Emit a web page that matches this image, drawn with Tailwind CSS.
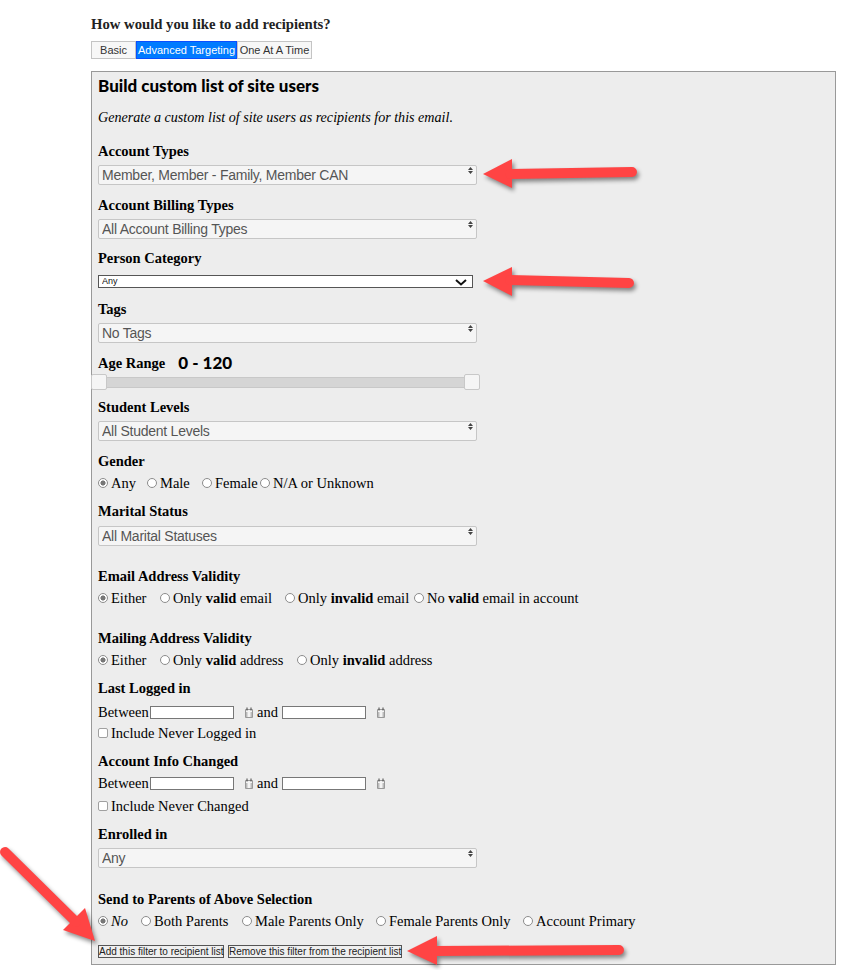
<!DOCTYPE html>
<html><head><meta charset="utf-8"><title>Recipients</title>
<script src="https://cdn.jsdelivr.net/npm/@tailwindcss/browser@4"></script></head>
<body class="bg-white font-['Liberation_Serif',serif] text-[14.5px] text-black">
<div class="relative h-[970px] w-[842px] overflow-hidden">
<div class="pl-[91px] pt-[14px]">
 <h2 class="h-5 text-[14.7px] font-bold leading-5 text-[#222]">How would you like to add recipients?</h2>
 <div class="mt-[7px] flex h-[18px] font-['Liberation_Sans',sans-serif] text-[11px] leading-4 whitespace-nowrap">
  <button class="w-[45px] border border-[#c4c4c4] bg-[#f7f7f7] text-[#333]">Basic</button>
  <button class="w-[101px] border border-[#0a4fff] bg-[#007bff] text-white">Advanced Targeting</button>
  <button class="w-[75px] border border-[#c4c4c4] bg-[#f7f7f7] text-[#333]">One At A Time</button>
 </div>
 <section class="mt-3 h-[894px] w-[745px] border border-[#999] bg-[#ededed] pl-[6px] pt-1 [&_h4]:h-5 [&_h4]:font-bold [&_h4]:leading-5">
  <h3 class="h-5 font-['Lato',sans-serif] text-[17px] font-black leading-5">Build custom list of site users</h3>
  <p class="mt-[11px] h-5 text-[14.1px] italic leading-5">Generate a custom list of site users as recipients for this email.</p>

  <h4 class="mt-[14px]">Account Types</h4>
  <div class="relative mt-1 h-5 w-[379px]"><select class="block h-5 w-full appearance-none rounded-[2px] border border-[#c6c6c6] bg-[#f5f5f5] pl-[3px] font-['Liberation_Sans',sans-serif] text-[14px] leading-4 tracking-[-0.25px] text-[#555]"><option>Member, Member - Family, Member CAN</option></select><svg class="absolute right-[4px] top-[2px] h-[7px] w-[5px]" viewBox="0 0 5 7"><path d="M2.500 0 5 3H0ZM0 4h5L2.500 7Z" fill="#444"/></svg></div>

  <h4 class="mt-[10px]">Account Billing Types</h4>
  <div class="relative mt-1 h-5 w-[379px]"><select class="block h-5 w-full appearance-none rounded-[2px] border border-[#c6c6c6] bg-[#f5f5f5] pl-[3px] font-['Liberation_Sans',sans-serif] text-[14px] leading-4 tracking-[-0.25px] text-[#555]"><option>All Account Billing Types</option></select><svg class="absolute right-[4px] top-[2px] h-[7px] w-[5px]" viewBox="0 0 5 7"><path d="M2.500 0 5 3H0ZM0 4h5L2.500 7Z" fill="#444"/></svg></div>

  <h4 class="mt-[9px]">Person Category</h4>
  <div class="relative mt-[7px] h-[13px] w-[375px]"><select class="block h-[13px] w-full appearance-none border border-[#555] bg-white pl-[3px] font-['Liberation_Sans',sans-serif] text-[9px] leading-[11px] text-[#111]"><option>Any</option></select><svg class="absolute right-[6px] top-[4px] h-[7px] w-[12px]" viewBox="0 0 12 7"><path d="M1 1 6 5.500 11 1" fill="none" stroke="#111" stroke-width="2"/></svg></div>

  <h4 class="mt-[11px]">Tags</h4>
  <div class="relative mt-1 h-5 w-[379px]"><select class="block h-5 w-full appearance-none rounded-[2px] border border-[#c6c6c6] bg-[#f5f5f5] pl-[3px] font-['Liberation_Sans',sans-serif] text-[14px] leading-4 tracking-[-0.25px] text-[#555]"><option>No Tags</option></select><svg class="absolute right-[4px] top-[2px] h-[7px] w-[5px]" viewBox="0 0 5 7"><path d="M2.500 0 5 3H0ZM0 4h5L2.500 7Z" fill="#444"/></svg></div>

  <h4 class="mt-[10px] flex items-center gap-[13px]">Age Range <span class="font-['Lato',sans-serif] text-[17px] font-black">0 - 120</span></h4>
  <div class="relative -ml-[6px] mt-1 h-[11px] w-[388px] rounded-r-[2px] border border-[#c8c8c8] bg-[#d5d5d5]">
   <span class="absolute -left-[2px] -top-[4px] h-4 w-4 rounded-[2px] border border-[#c8c8c8] bg-[#f5f5f5]"></span>
   <span class="absolute -top-[4px] left-[371px] h-4 w-4 rounded-[2px] border border-[#c8c8c8] bg-[#f5f5f5]"></span>
  </div>

  <h4 class="mt-[9px]">Student Levels</h4>
  <div class="relative mt-1 h-5 w-[379px]"><select class="block h-5 w-full appearance-none rounded-[2px] border border-[#c6c6c6] bg-[#f5f5f5] pl-[3px] font-['Liberation_Sans',sans-serif] text-[14px] leading-4 tracking-[-0.25px] text-[#555]"><option>All Student Levels</option></select><svg class="absolute right-[4px] top-[2px] h-[7px] w-[5px]" viewBox="0 0 5 7"><path d="M2.500 0 5 3H0ZM0 4h5L2.500 7Z" fill="#444"/></svg></div>

  <h4 class="mt-[10px]">Gender</h4>
  <div class="mt-[2px] flex h-5 items-center whitespace-nowrap pt-[2px] [&_input]:mr-[3px] [&_input]:-mt-[2px] [&_input]:size-[10px] [&_input]:appearance-none [&_input]:rounded-full [&_input]:border [&_input]:border-[#8c8c8c] [&_input]:bg-white [&_input]:checked:bg-[radial-gradient(circle,#777_40%,#fff_50%)]">
   <label class="flex w-[49px] items-center"><input type="radio" name="g" checked>Any</label>
   <label class="flex w-[55px] items-center"><input type="radio" name="g">Male</label>
   <label class="flex w-[58px] items-center"><input type="radio" name="g">Female</label>
   <label class="flex items-center"><input type="radio" name="g">N/A or Unknown</label>
  </div>

  <h4 class="mt-[8px]">Marital Status</h4>
  <div class="relative mt-[5px] h-5 w-[379px]"><select class="block h-5 w-full appearance-none rounded-[2px] border border-[#c6c6c6] bg-[#f5f5f5] pl-[3px] font-['Liberation_Sans',sans-serif] text-[14px] leading-4 tracking-[-0.25px] text-[#555]"><option>All Marital Statuses</option></select><svg class="absolute right-[4px] top-[2px] h-[7px] w-[5px]" viewBox="0 0 5 7"><path d="M2.500 0 5 3H0ZM0 4h5L2.500 7Z" fill="#444"/></svg></div>

  <h4 class="mt-5">Email Address Validity</h4>
  <div class="mt-[2px] flex h-5 items-center whitespace-nowrap pt-[2px] [&_input]:mr-[3px] [&_input]:-mt-[2px] [&_input]:size-[10px] [&_input]:appearance-none [&_input]:rounded-full [&_input]:border [&_input]:border-[#8c8c8c] [&_input]:bg-white [&_input]:checked:bg-[radial-gradient(circle,#777_40%,#fff_50%)]">
   <label class="flex w-[62px] items-center"><input type="radio" name="e" checked>Either</label>
   <label class="flex w-[125px] items-center"><input type="radio" name="e"><span>Only <b>valid</b> email</span></label>
   <label class="flex w-[129px] items-center"><input type="radio" name="e"><span>Only <b>invalid</b> email</span></label>
   <label class="flex items-center"><input type="radio" name="e"><span>No <b>valid</b> email in account</span></label>
  </div>

  <h4 class="mt-5">Mailing Address Validity</h4>
  <div class="mt-[2px] flex h-5 items-center whitespace-nowrap pt-[2px] [&_input]:mr-[3px] [&_input]:-mt-[2px] [&_input]:size-[10px] [&_input]:appearance-none [&_input]:rounded-full [&_input]:border [&_input]:border-[#8c8c8c] [&_input]:bg-white [&_input]:checked:bg-[radial-gradient(circle,#777_40%,#fff_50%)]">
   <label class="flex w-[62px] items-center"><input type="radio" name="m" checked>Either</label>
   <label class="flex w-[137px] items-center"><input type="radio" name="m"><span>Only <b>valid</b> address</span></label>
   <label class="flex items-center"><input type="radio" name="m"><span>Only <b>invalid</b> address</span></label>
  </div>

  <h4 class="mt-[8px]">Last Logged in</h4>
  <div class="mt-1 flex h-5 items-center pt-[2px] [&_input]:-mt-[2px] [&_svg]:-mt-[2px]">
   <span class="w-[52px]">Between</span><input class="h-[13px] w-[84px] border border-[#777] bg-white">
   <svg class="ml-[11px] h-[11px] w-[8px]" viewBox="0 0 8 11"><path d="M.5 2.500h7v8h-7z" fill="#f4f4f4" stroke="#999"/><path d="M2 .5v3M6 .5v3" stroke="#444"/><path d="M1 5h1.500v5H1zM5.500 5H7v5H5.500z" fill="#bbb"/></svg>
   <span class="ml-[4px] w-[25px]">and</span><input class="h-[13px] w-[84px] border border-[#777] bg-white">
   <svg class="ml-[11px] h-[11px] w-[8px]" viewBox="0 0 8 11"><path d="M.5 2.500h7v8h-7z" fill="#f4f4f4" stroke="#999"/><path d="M2 .5v3M6 .5v3" stroke="#444"/><path d="M1 5h1.500v5H1zM5.500 5H7v5H5.500z" fill="#bbb"/></svg>
  </div>
  <label class="mt-px flex h-5 items-center pt-[2px]"><input type="checkbox" class="-mt-[2px] mr-[3px] size-[10px] appearance-none rounded-[2px] border border-[#a0a0a0] bg-white">Include Never Logged in</label>

  <h4 class="mt-[8px]">Account Info Changed</h4>
  <div class="mt-[2px] flex h-5 items-center pt-[2px] [&_input]:-mt-[2px] [&_svg]:-mt-[2px]">
   <span class="w-[52px]">Between</span><input class="h-[13px] w-[84px] border border-[#777] bg-white">
   <svg class="ml-[11px] h-[11px] w-[8px]" viewBox="0 0 8 11"><path d="M.5 2.500h7v8h-7z" fill="#f4f4f4" stroke="#999"/><path d="M2 .5v3M6 .5v3" stroke="#444"/><path d="M1 5h1.500v5H1zM5.500 5H7v5H5.500z" fill="#bbb"/></svg>
   <span class="ml-[4px] w-[25px]">and</span><input class="h-[13px] w-[84px] border border-[#777] bg-white">
   <svg class="ml-[11px] h-[11px] w-[8px]" viewBox="0 0 8 11"><path d="M.5 2.500h7v8h-7z" fill="#f4f4f4" stroke="#999"/><path d="M2 .5v3M6 .5v3" stroke="#444"/><path d="M1 5h1.500v5H1zM5.500 5H7v5H5.500z" fill="#bbb"/></svg>
  </div>
  <label class="mt-[3px] flex h-5 items-center pt-[2px]"><input type="checkbox" class="-mt-[2px] mr-[3px] size-[10px] appearance-none rounded-[2px] border border-[#a0a0a0] bg-white">Include Never Changed</label>

  <h4 class="mt-[8px]">Enrolled in</h4>
  <div class="relative mt-1 h-5 w-[379px]"><select class="block h-5 w-full appearance-none rounded-[2px] border border-[#c6c6c6] bg-[#f5f5f5] pl-[3px] font-['Liberation_Sans',sans-serif] text-[14px] leading-4 tracking-[-0.25px] text-[#555]"><option>Any</option></select><svg class="absolute right-[4px] top-[2px] h-[7px] w-[5px]" viewBox="0 0 5 7"><path d="M2.500 0 5 3H0ZM0 4h5L2.500 7Z" fill="#444"/></svg></div>

  <h4 class="mt-[21px]">Send to Parents of Above Selection</h4>
  <div class="mt-[2px] flex h-5 items-center whitespace-nowrap pt-[2px] [&_input]:mr-[3px] [&_input]:-mt-[2px] [&_input]:size-[10px] [&_input]:appearance-none [&_input]:rounded-full [&_input]:border [&_input]:border-[#8c8c8c] [&_input]:bg-white [&_input]:checked:bg-[radial-gradient(circle,#777_40%,#fff_50%)]">
   <label class="flex w-[43px] items-center"><input type="radio" name="p" checked><i>No</i></label>
   <label class="flex w-[101px] items-center"><input type="radio" name="p">Both Parents</label>
   <label class="flex w-[134px] items-center"><input type="radio" name="p">Male Parents Only</label>
   <label class="flex w-[147px] items-center"><input type="radio" name="p">Female Parents Only</label>
   <label class="flex items-center"><input type="radio" name="p">Account Primary</label>
  </div>

  <div class="mt-[14px] flex h-[13px] gap-[4px] font-['Liberation_Sans',sans-serif] text-[10px] leading-[11px] text-[#222]">
   <button class="w-[126px] border border-[#555] bg-[#efefef] whitespace-nowrap">Add this filter to recipient list</button>
   <button class="w-[174px] border border-[#555] bg-[#efefef] whitespace-nowrap">Remove this filter from the recipient list</button>
  </div>
 </section>
</div>

<svg class="pointer-events-none absolute inset-0 drop-shadow-[2px_3px_2px_rgba(0,0,0,0.45)]" width="842" height="970" viewBox="0 0 842 970" fill="#ff4444" stroke="#ff4444" stroke-linecap="round">
 <path d="M483 174 512 159v29Z" stroke="none"/><path d="M510 174 632 172" stroke-width="10" fill="none"/>
 <path d="M483 281 512 267v29Z" stroke="none"/><path d="M510 280 629 283" stroke-width="10" fill="none"/>
 <path d="M407 951 437 936v29Z" stroke="none"/><path d="M435 951 619 950" stroke-width="10" fill="none"/>
 <path d="M95 941 63 930 85 908Z" stroke="none"/><path d="M5 852 76 922" stroke-width="10" fill="none"/>
</svg>
</div>
</body></html>
